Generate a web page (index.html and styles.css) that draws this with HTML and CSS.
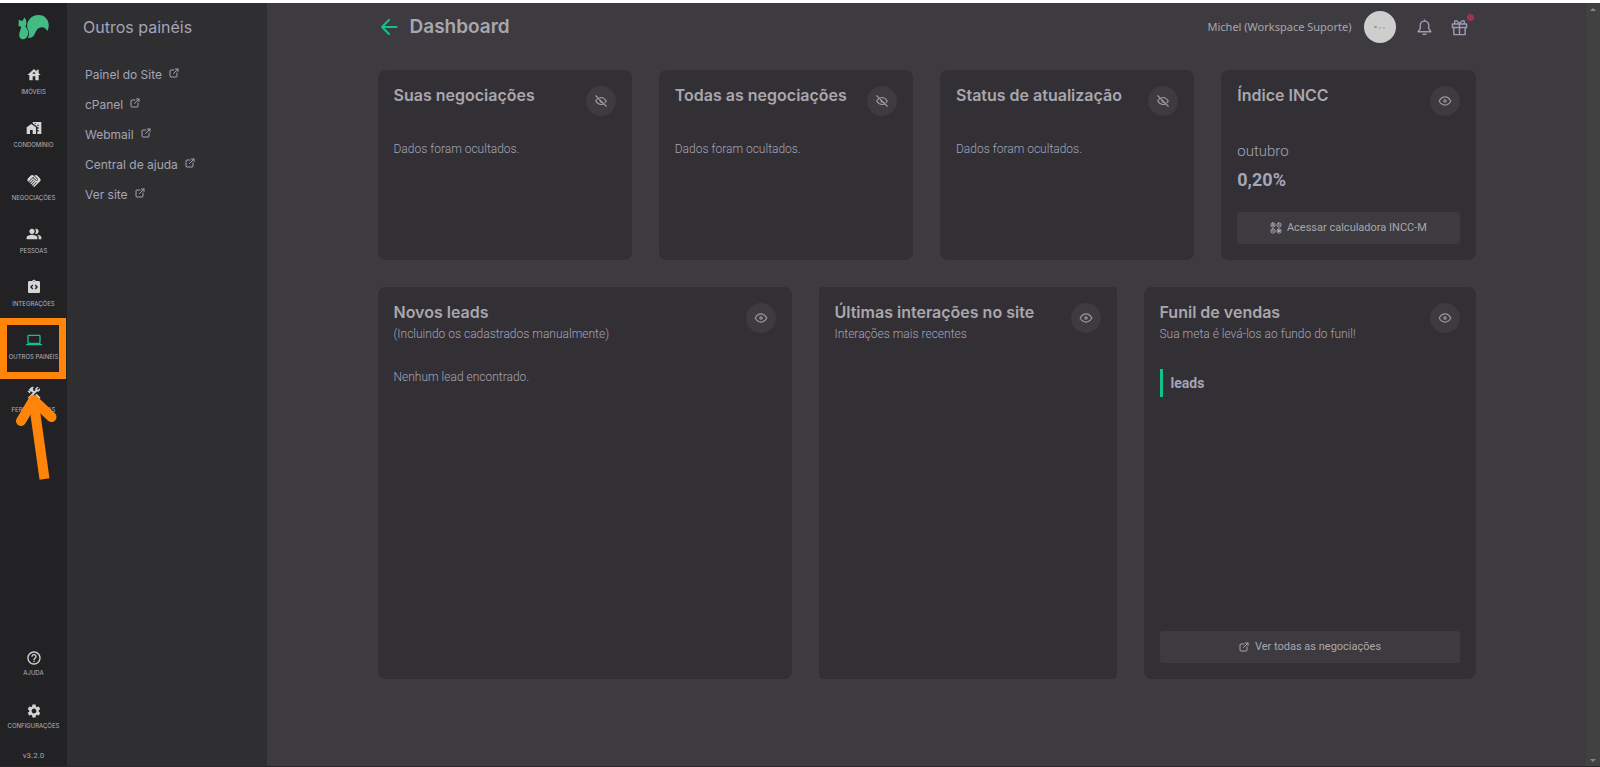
FILE: index.html
```html
<!DOCTYPE html>
<html lang="pt-BR">
<head>
<meta charset="utf-8">
<meta name="viewport" content="width=device-width, initial-scale=1">
<title>Dashboard</title>
<link rel="stylesheet" href="styles.css">
</head>
<body>
<svg class="sprite" aria-hidden="true">
  <symbol id="external" viewBox="0 0 24 24"><path d="M12 6H6a2 2 0 0 0-2 2v10a2 2 0 0 0 2 2h10a2 2 0 0 0 2-2v-6M11 13l9-9M15 4h5v5"/></symbol>
  <symbol id="eye" viewBox="0 0 24 24"><path d="M10 12a2 2 0 1 0 4 0a2 2 0 1 0-4 0M22 12q-4 7-10 7t-10-7q4-7 10-7t10 7"/></symbol>
  <symbol id="eye-off" viewBox="0 0 24 24"><path d="M10.600 10.600a2 2 0 0 0 2.800 2.800M16.700 16.700A9 9 0 0 1 12 18q-5.400 0-9-6q1.900-3.200 4.300-4.700M10.100 6.200A9 9 0 0 1 12 6q5.400 0 9 6q-1 1.700-2.100 2.900M3 3l18 18"/></symbol>
</svg>
<div class="app">
  <nav class="rail" aria-label="Principal">
    <a class="logo" href="#" aria-label="Início">
      <svg viewBox="0 0 31 25"><path d="M6.500 2.500C7.800 4 8.800 6.500 8.300 9c-.3 1.300-.8 2-.6 3 2 2 3 4.500 2.300 7.500C9.200 22.500 7.500 24.300 5 24.300c-2.600 0-3.800-2-3.800-4.300 0-3.500 1.800-5 2-8.500C2 11.500.8 11.600.5 10.500.2 9.300 1 8.600.8 7.500.5 6 .5 5 1 4.700c1.300.5 2 1.200 3.200 1.200C5 5.300 5.500 3.700 6.500 2.500z"/><path d="M9.200 12.500C8.600 5.500 13.500 0 20.500 0 27 0 30.700 5 30.700 10c0 3-.8 5.500-1.500 6-1-2.500-2.800-3.800-5.200-3.800-4.800 0-6 4.300-7.800 7.800-1.200 2.200-3.500 3.200-6.200 3 1.200-2.500 1.500-6.500-.8-10.500z"/></svg>
    </a>
    <ul class="rail-list">
      <li><a href="#"><svg viewBox="0 0 24 24"><path d="M19 9.300V4h-3v2.600L12 3 2 12h3v8h5v-6h4v6h5v-8h3l-3-2.700zM10 10c0-1.100.9-2 2-2s2 .9 2 2h-4z"/></svg>IMÓVEIS</a></li>
      <li><a href="#"><svg viewBox="0 0 24 24"><path d="M1 11v10h5v-6h4v6h5V11L8 6z"/><path d="M10 3v1.970l7 5V11h2v2h-2v2h2v2h-2v4h6V3H10zm9 6h-2V7h2v2zM13 5h2v1.500l-2-1.400z" fill-rule="evenodd"/></svg>CONDOMÍNIO</a></li>
      <li><a href="#"><svg viewBox="0 0 24 24"><path d="M16.480 10.410c-.39.39-1.040.39-1.430 0l-4.470-4.460-7.050 7.040-.66-.63c-1.170-1.170-1.170-3.070 0-4.240l4.240-4.240c1.170-1.170 3.070-1.170 4.240 0L16.480 9c.39.39.39 1.020 0 1.410zM17.180 8.290c.78.78.78 2.050 0 2.830-1.270 1.270-2.610.22-2.830 0l-3.760-3.760-5.570 5.570c-.39.39-.39 1.020 0 1.410s1.020.39 1.420 0l4.620-4.620.71.71-4.620 4.620c-.39.39-.39 1.020 0 1.410s1.020.39 1.420 0l4.620-4.620.71.71-4.620 4.620c-.39.39-.39 1.020 0 1.410s1.020.39 1.410 0l4.620-4.620.71.71-4.620 4.620c-.39.39-.39 1.020 0 1.410s1.020.39 1.410 0l8.320-8.340c1.170-1.170 1.170-3.070 0-4.240l-4.240-4.240c-1.150-1.150-3.010-1.170-4.180-.06l4.470 4.470z"/></svg>NEGOCIAÇÕES</a></li>
      <li><a href="#"><svg viewBox="0 0 24 24"><path d="M16.670 13.130C18.040 14.060 19 15.320 19 17v3h4v-3c0-2.180-3.570-3.470-6.330-3.870zM15 12c2.210 0 4-1.790 4-4s-1.790-4-4-4c-.47 0-.91.1-1.330.24C14.500 5.270 15 6.580 15 8s-.5 2.730-1.330 3.760c.42.14.86.24 1.330.24zM9 12c2.210 0 4-1.790 4-4s-1.790-4-4-4-4 1.790-4 4 1.790 4 4 4zm0 1c-2.670 0-8 1.340-8 4v3h16v-3c0-2.660-5.330-4-8-4z"/></svg>PESSOAS</a></li>
      <li><a href="#"><svg viewBox="0 0 24 24"><path d="M19 3h-4.180C14.400 1.840 13.300 1 12 1s-2.400.84-2.820 2H5c-1.100 0-2 .9-2 2v14c0 1.100.9 2 2 2h14c1.100 0 2-.9 2-2V5c0-1.100-.9-2-2-2zm-8 11.170-1.410 1.420L6 12l3.590-3.590L11 9.830 8.830 12 11 14.170zm1-9.920c-.41 0-.75-.34-.75-.75s.34-.75.75-.75.75.34.75.75-.34.75-.75.75zm2.410 11.340L13 14.170 15.170 12 13 9.830l1.410-1.420L18 12l-3.590 3.590z"/></svg>INTEGRAÇÕES</a></li>
      <li class="highlighted"><a class="current" href="#" aria-current="page"><svg viewBox="0 0 24 24"><path d="M20 18c1.100 0 1.990-.9 1.990-2L22 6c0-1.100-.9-2-2-2H4c-1.100 0-2 .9-2 2v10c0 1.100.9 2 2 2H0v2h24v-2h-4zM4 6h16v10H4V6z"/></svg>OUTROS PAINÉIS</a></li>
      <li><a href="#"><svg viewBox="0 0 24 24"><path d="M13.783 15.172l2.121-2.121 5.996 5.996-2.121 2.121zM17.500 10c1.930 0 3.500-1.570 3.500-3.500 0-.58-.16-1.120-.41-1.600l-2.700 2.700-1.490-1.490 2.700-2.700c-.48-.25-1.020-.41-1.600-.41C15.570 3 14 4.570 14 6.500c0 .41.080.8.210 1.160l-1.850 1.850-1.780-1.780.71-.71-1.410-1.410L12 3.490c-1.170-1.170-3.070-1.170-4.240 0L4.220 7.030l1.410 1.410H2.810l-.71.71 3.540 3.540.71-.71V9.150l1.410 1.410.71-.71 1.780 1.780-7.410 7.410 2.120 2.120L16.340 9.790c.36.13.75.21 1.160.21z"/></svg>FERRAMENTAS</a>
        <svg class="arrow" viewBox="0 0 66 90" aria-hidden="true"><path d="M34 10l10.500 75"/><path class="head" d="M21 27L33.500 6 51.500 23"/></svg></li>
    </ul>
    <ul class="rail-list rail-end">
      <li><a href="#"><svg viewBox="0 0 24 24"><path d="M11 18h2v-2h-2v2zm1-16C6.480 2 2 6.480 2 12s4.480 10 10 10 10-4.480 10-10S17.520 2 12 2zm0 18c-4.410 0-8-3.590-8-8s3.590-8 8-8 8 3.590 8 8-3.590 8-8 8zm0-14c-2.210 0-4 1.790-4 4h2c0-1.100.9-2 2-2s2 .9 2 2c0 2-3 1.750-3 5h2c0-2.250 3-2.500 3-5 0-2.210-1.790-4-4-4z"/></svg>AJUDA</a></li>
      <li><a href="#"><svg viewBox="0 0 24 24"><path d="M19.140 12.940c.04-.3.060-.61.060-.94 0-.32-.02-.64-.07-.94l2.030-1.580c.18-.14.230-.41.120-.61l-1.920-3.320c-.12-.22-.37-.29-.59-.22l-2.390.96c-.5-.38-1.030-.7-1.620-.94l-.36-2.540c-.04-.24-.24-.41-.48-.41h-3.840c-.24 0-.43.170-.47.410l-.36 2.540c-.59.240-1.130.570-1.620.94l-2.390-.96c-.22-.08-.47 0-.59.220L2.740 8.870c-.12.210-.08.470.12.610l2.030 1.580c-.05.300-.09.630-.09.940s.02.640.07.940l-2.030 1.580c-.18.140-.23.410-.12.610l1.920 3.320c.12.220.37.290.59.220l2.390-.96c.5.380 1.030.700 1.620.94l.36 2.540c.05.240.24.410.48.410h3.840c.24 0 .44-.17.470-.41l.36-2.540c.59-.24 1.130-.56 1.620-.94l2.390.96c.22.080.47 0 .59-.22l1.920-3.320c.12-.22.070-.47-.12-.61l-2.010-1.580zM12 15.600c-1.980 0-3.600-1.620-3.600-3.600s1.620-3.600 3.600-3.600 3.600 1.620 3.600 3.600-1.620 3.600-3.600 3.600z"/></svg>CONFIGURAÇÕES</a></li>
    </ul>
    <p class="version">v3.2.0</p>
  </nav>

  <aside class="panel">
    <h2>Outros painéis</h2>
    <ul>
      <li><a href="#">Painel do Site <svg class="line"><use href="#external"/></svg></a></li>
      <li><a href="#">cPanel <svg class="line"><use href="#external"/></svg></a></li>
      <li><a href="#">Webmail <svg class="line"><use href="#external"/></svg></a></li>
      <li><a href="#">Central de ajuda <svg class="line"><use href="#external"/></svg></a></li>
      <li><a href="#">Ver site <svg class="line"><use href="#external"/></svg></a></li>
    </ul>
  </aside>

  <main class="main">
    <div class="content">
      <header class="topbar">
        <a class="back" href="#" aria-label="Voltar"><svg class="line" viewBox="0 0 18 18"><path d="M16.500 9H2M9 2L2 9l7 7"/></svg></a>
        <h1>Dashboard</h1>
        <span class="user">Michel (Workspace Suporte)</span>
        <span class="avatar"><svg viewBox="0 0 32 32"><path d="M10 15l3 1-3 1M15 17h2M19 17h2"/></svg></span>
        <button class="tool" type="button" aria-label="Notificações"><svg class="line" viewBox="0 0 24 24"><path d="M12 3a6 6 0 0 0-6 6v4.500L3 18h18l-3-4.500V9a6 6 0 0 0-6-6zM10 21.500h4M12 1.500V3"/></svg></button>
        <button class="tool gift" type="button" aria-label="Novidades"><svg class="line" viewBox="0 0 24 24"><path d="M2 7h20v5H2zM4 12v10h16V12M12 7v15M12 7C10 2 5 1 5 4.500 5 6 6 7 7 7M12 7c2-5 7-6 7-2.500C19 6 18 7 17 7"/></svg><i class="dot"></i></button>
      </header>

      <section class="row summary">
        <article class="card"><div class="card-head"><h3>Suas negociações</h3><button class="round" type="button" aria-label="Mostrar"><svg class="line"><use href="#eye-off"/></svg></button></div><p class="message">Dados foram ocultados.</p></article>
        <article class="card"><div class="card-head"><h3>Todas as negociações</h3><button class="round" type="button" aria-label="Mostrar"><svg class="line"><use href="#eye-off"/></svg></button></div><p class="message">Dados foram ocultados.</p></article>
        <article class="card"><div class="card-head"><h3>Status de atualização</h3><button class="round" type="button" aria-label="Mostrar"><svg class="line"><use href="#eye-off"/></svg></button></div><p class="message">Dados foram ocultados.</p></article>
        <article class="card"><div class="card-head"><h3>Índice INCC</h3><button class="round" type="button" aria-label="Ocultar"><svg class="line"><use href="#eye"/></svg></button></div>
          <p class="month">outubro</p><p class="rate">0,20%</p>
          <button class="action" type="button"><svg class="line" viewBox="0 0 24 24"><rect x="2" y="2" width="8" height="8" rx="3"/><rect x="14" y="2" width="8" height="8" rx="3"/><rect x="2" y="14" width="8" height="8" rx="3"/><rect x="14" y="14" width="8" height="8" rx="3"/><path d="M4 6h4M6 4v4M16 6h4M4 18h4M16 17h4M16 19h4"/></svg>Acessar calculadora INCC-M</button></article>
      </section>

      <section class="row details">
        <article class="card"><div class="card-head"><div><h3>Novos leads</h3><p>(Incluindo os cadastrados manualmente)</p></div><button class="round" type="button" aria-label="Ocultar"><svg class="line"><use href="#eye"/></svg></button></div><p class="message">Nenhum lead encontrado.</p></article>
        <article class="card square"><div class="card-head"><div><h3>Últimas interações no site</h3><p>Interações mais recentes</p></div><button class="round" type="button" aria-label="Ocultar"><svg class="line"><use href="#eye"/></svg></button></div></article>
        <article class="card"><div class="card-head"><div><h3>Funil de vendas</h3><p>Sua meta é levá-los ao fundo do funil!</p></div><button class="round" type="button" aria-label="Ocultar"><svg class="line"><use href="#eye"/></svg></button></div><p class="stage">leads</p>
          <button class="action" type="button"><svg class="line"><use href="#external"/></svg>Ver todas as negociações</button></article>
      </section>
    </div>
  </main>
  <div class="scroll" aria-hidden="true"><i class="up"></i><i class="down"></i></div>
</div>
</body>
</html>
```
FILE: styles.css
```css
* { box-sizing: border-box; }
body { margin: 0; color: #a5a4b8; background: #3d3b40; font: 12px/16px Roboto, sans-serif; }
h1, h2, h3, p, ul { margin: 0; padding: 0; }
ul { list-style: none; }
a { color: inherit; text-decoration: none; }
button { border: 0; padding: 0; color: inherit; background: none; font: inherit; cursor: pointer; }
svg { display: block; fill: currentColor; }
.line { fill: none; stroke: currentColor; stroke-width: 2; stroke-linecap: round; stroke-linejoin: round; }
.sprite { position: absolute; width: 0; height: 0; }
.app { display: flex; min-height: 100vh; border-top: 3px solid #fff; border-bottom: 1px solid #2a2829; }

.rail { display: flex; flex-direction: column; flex: none; width: 67px; padding-top: 12px; background: #222224; }
.logo { align-self: center; color: #42bb85; }
.logo svg { width: 31px; height: 25px; }
.rail-list { margin-top: 27px; }
.rail-list li { position: relative; height: 53px; }
.rail-list a { display: flex; flex-direction: column; align-items: center; gap: 5px; color: #b4b3c6; font: 400 6px/8px Inter, sans-serif; white-space: nowrap; }
.rail-list a svg { width: 16px; height: 16px; color: #d5d5d5; }
.rail-list .current svg { color: #12c286; }
.rail .rail-end { margin-top: auto; }
.rail-end a { gap: 3px; }
.rail-end li:last-child { height: 48px; }
.version { padding-bottom: 5px; color: #a5a4b8; font-size: 8px; line-height: 10px; text-align: center; }
.highlighted::after { content: ""; box-sizing: border-box; position: absolute; top: -14px; left: 0; width: 66px; height: 61px; border: 7px solid #ff840a; }
.arrow { position: absolute; z-index: 1; top: 9px; left: 0; width: 66px; height: 90px; fill: none; stroke: #ff840a; stroke-width: 10; }
.arrow .head { stroke-linecap: round; stroke-linejoin: round; }

.panel { flex: none; width: 200px; padding: 14px 16px; background: #2f2f31; font-family: Inter, sans-serif; }
.panel h2 { font-size: 16px; line-height: 20px; font-weight: 400; }
.panel ul { margin-top: 28px; padding-left: 2px; }
.panel li { height: 30px; }
.panel a { display: flex; gap: 6px; line-height: 20px; }
.panel a svg { width: 12px; height: 12px; margin-top: 2px; }

.main { flex: 1; min-width: 0; padding: 0 24px; }
.content { max-width: 1098px; margin: 0 auto; }
.topbar { display: flex; align-items: center; height: 48px; }
.back { margin-left: 2px; color: #12c286; }
.back svg { width: 18px; height: 18px; }
h1 { margin-left: 12px; color: #a9a7ad; font: 600 19px/24px Inter, sans-serif; }
.user { margin-left: auto; color: #a9a7ad; font: 11px/16px "Noto Sans", sans-serif; }
.avatar { width: 32px; height: 32px; margin-left: 12px; border-radius: 50%; background: #cecece; }
.avatar svg { fill: none; stroke: #999; }
.tool { position: relative; margin-left: 20px; color: #9d9cb4; }
.tool svg { width: 17px; height: 17px; }
.gift { margin-right: 8px; margin-left: 18px; }
.dot { position: absolute; top: -5px; right: -6px; width: 7px; height: 7px; border-radius: 50%; background: #9c3354; }

.row { display: grid; gap: 27px; }
.summary { grid-template-columns: repeat(4, minmax(0, 1fr)); margin-top: 19px; }
.details { grid-template-columns: minmax(0, 414fr) minmax(0, 298fr) minmax(0, 332fr); margin: 27px 0; }
.card { display: flex; flex-direction: column; min-height: 190px; padding: 16px; border-radius: 8px; background: #323035; }
.details .card { min-height: 392px; }
.square { border-radius: 4px; }
.card-head { display: flex; justify-content: space-between; min-height: 46px; }
h3 { color: #a9a7ad; font: 600 16px/18px Inter, sans-serif; }
.card-head p { margin-top: 5px; }
.round { display: grid; place-items: center; flex: none; width: 30px; height: 30px; border-radius: 50%; color: #9b999f; background: #3d3b40; }
.round svg { width: 14px; height: 14px; }
.message { margin-top: 9px; }
.card-head p, .message { font-weight: 300; }
.details .message { margin-top: 20px; }
.month { margin-top: 9px; font-size: 15px; line-height: 20px; font-weight: 300; }
.rate { margin-top: 9px; font-size: 18px; line-height: 20px; font-weight: 700; }
.action { display: flex; align-items: center; justify-content: center; gap: 5px; height: 32px; margin-top: auto; border-radius: 3px; color: #a9a7ad; background: #3d3b40; font-size: 11px; }
.action svg { width: 12px; height: 12px; }
.stage { align-self: flex-start; margin-top: 20px; padding: 6px 8px; border-left: 3px solid #12c286; font-size: 14px; font-weight: 700; }

.scroll { display: flex; flex: none; flex-direction: column; justify-content: space-between; align-items: center; width: 14px; padding: 5px 0 4px; background: #41413f; }
.up, .down { border: 3px solid transparent; }
.up { border-top: 0; border-bottom-color: #858585; }
.down { border-bottom: 0; border-top-color: #858585; }
```
